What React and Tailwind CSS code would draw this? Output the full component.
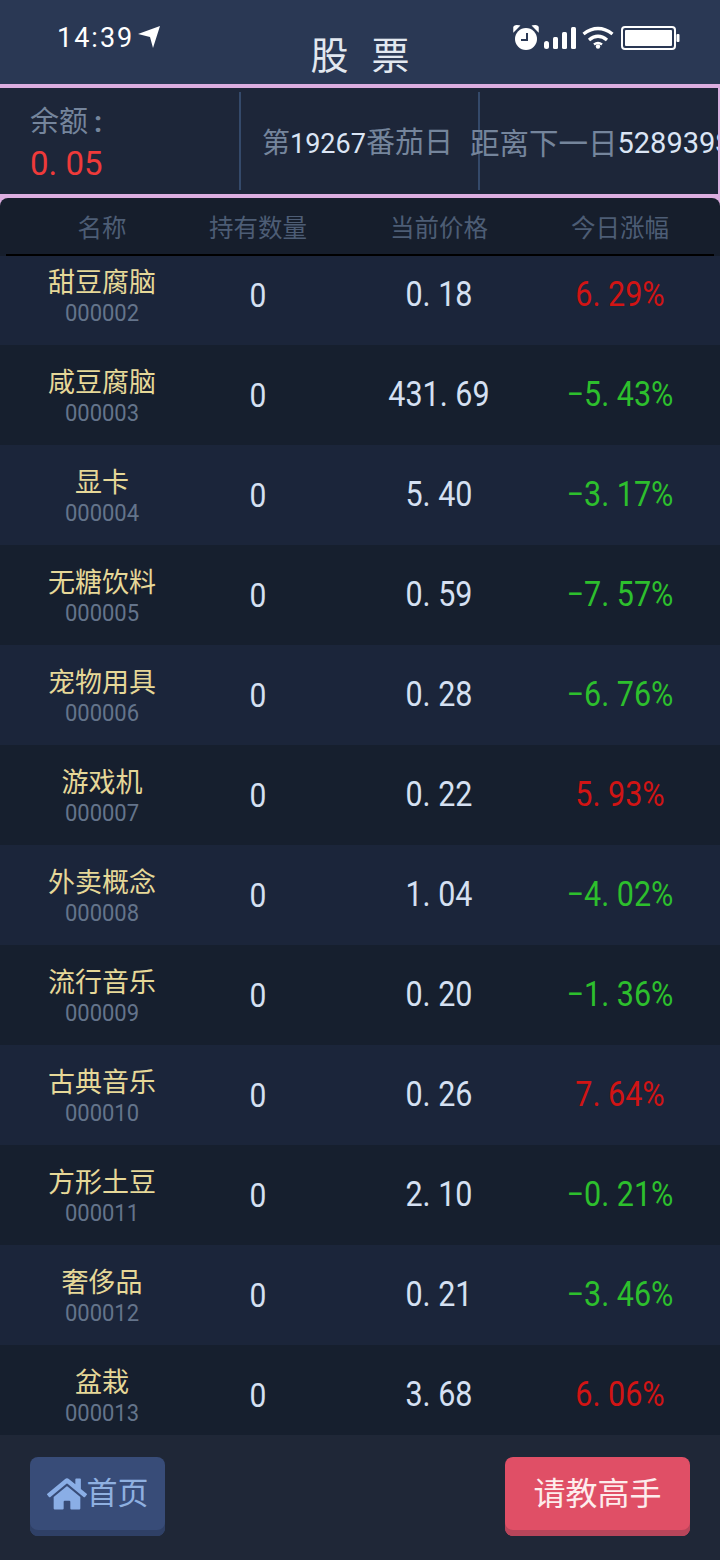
import { FaHome } from "react-icons/fa";

const stocks = [
	{ name: "甜豆腐脑", code: "000002", price: "0. 18", change: "6. 29%", up: true },
	{ name: "咸豆腐脑", code: "000003", price: "431. 69", change: "−5. 43%" },
	{ name: "显卡", code: "000004", price: "5. 40", change: "−3. 17%" },
	{ name: "无糖饮料", code: "000005", price: "0. 59", change: "−7. 57%" },
	{ name: "宠物用具", code: "000006", price: "0. 28", change: "−6. 76%" },
	{ name: "游戏机", code: "000007", price: "0. 22", change: "5. 93%", up: true },
	{ name: "外卖概念", code: "000008", price: "1. 04", change: "−4. 02%" },
	{ name: "流行音乐", code: "000009", price: "0. 20", change: "−1. 36%" },
	{ name: "古典音乐", code: "000010", price: "0. 26", change: "7. 64%", up: true },
	{ name: "方形土豆", code: "000011", price: "2. 10", change: "−0. 21%" },
	{ name: "奢侈品", code: "000012", price: "0. 21", change: "−3. 46%" },
	{ name: "盆栽", code: "000013", price: "3. 68", change: "6. 06%", up: true },
];

const StatusIcons = () => (
	<div className="flex items-center gap-[5px]">
		{/* alarm */}
		<svg width="26" height="28" viewBox="0 0 26 28" fill="none">
			<path d="M1 7 L6 2 Q2 1 1 3 Z M25 7 L20 2 Q24 1 25 3 Z" fill="#fff" stroke="#fff" strokeWidth="1.5" />
			<circle cx="13" cy="15" r="11" fill="#fff" />
			<path d="M14 9 V16 H8" stroke="#2a3854" strokeWidth="2" fill="none" />
		</svg>
		{/* signal */}
		<svg width="32" height="22" viewBox="0 0 32 22" fill="#fff">
			<rect x="0" y="14" width="5" height="8" rx="2.5" />
			<rect x="9" y="10" width="5" height="12" rx="1.5" />
			<rect x="18" y="5" width="5" height="17" rx="1.5" />
			<rect x="27" y="0" width="5" height="22" rx="1.5" />
		</svg>
		{/* wifi */}
		<svg width="32" height="24" viewBox="0 0 32 24" fill="none" stroke="#fff" strokeWidth="3.4" className="ml-[1px]">
			<path d="M1.5 8 Q16 -3 30.5 8" />
			<path d="M7 14 Q16 6.5 25 14" />
			<circle cx="16" cy="20.5" r="2.2" fill="#fff" stroke="none" />
			<path d="M12 18.5 Q16 15.5 20 18.5" strokeWidth="2.6" />
		</svg>
		{/* battery */}
		<svg width="59" height="24" viewBox="0 0 59 24" className="ml-[2px]">
			<rect x="1" y="1" width="53" height="22" rx="3" fill="none" stroke="#fff" strokeWidth="2" />
			<rect x="4" y="4" width="47" height="16" rx="1" fill="#fff" />
			<rect x="55.5" y="8" width="3" height="8" rx="1" fill="#fff" />
		</svg>
	</div>
);

const StockRow = ({ stock, index }) => (
	<div
		className={`grid grid-cols-[204px_108px_254px_108px] items-center h-[100px] shrink-0 text-center ${
			index % 2 === 0 ? "bg-[#1b253a]" : "bg-[#161f2e]"
		} ${index === 0 ? "-mt-[11px]" : ""}`}
	>
		<div className="flex flex-col items-center pt-[2px]">
			<span className="text-[27px] leading-[34px] text-[#e6d898]">{stock.name}</span>
			<span className="-mt-[1px] inline-block scale-y-[1.12] text-[22px] leading-[27px] text-[#64748b]">{stock.code}</span>
		</div>
		<span className="inline-block scale-y-[1.12] text-[30px] text-[#d5e0f2]">0</span>
		<span className="inline-block scale-y-[1.12] text-[30.5px] text-[#d5e0f2] whitespace-nowrap">{stock.price}</span>
		<span
			className={`inline-block scale-y-[1.12] text-[30.5px] whitespace-nowrap ${
				stock.up ? "text-[#d11414]" : "text-[#2dbf2d]"
			}`}
		>
			{stock.change}
		</span>
	</div>
);

const App = () => {
	return (
		<div className="w-[720px] h-[1560px] overflow-hidden flex flex-col bg-[#1f2737] font-[Roboto,'Noto_Sans_CJK_SC',sans-serif]">
			{/* Header */}
			<div className="h-[84px] shrink-0 bg-[#2a3854] overflow-hidden">
				<div className="flex justify-between items-center pt-[24px] pl-[57px] pr-[40px]">
					<div className="flex items-center gap-[3px] text-[27px] leading-[28px] text-white tracking-[2px]">
						<span>14:39</span>
						<svg width="24" height="24" viewBox="0 0 24 24" fill="#fff" className="-mt-[3px]">
							<path d="M1 9 L23 1 L16 23 L13 12 Z" />
						</svg>
					</div>
					<StatusIcons />
				</div>
				<div className="-mt-[18px] flex justify-center gap-[23px] text-[38px] leading-[44px] text-[#e2e8f0]">
					<span>股</span>
					<span>票</span>
				</div>
			</div>

			{/* Balance */}
			<div className="h-[114px] shrink-0 flex items-center bg-[#1d2639] border-y-[4px] border-r-2 border-[#dcaee0] overflow-hidden">
				<div className="w-[241px] h-[98px] shrink-0 pl-[30px] pt-[9px] border-r-2 border-[#34496a]">
					<div className="text-[29px] leading-[43px] text-[#75859c]">
						余额<span className="ml-[6px] font-bold">:</span>
					</div>
					<div className="text-[33px] leading-[40px] text-[#ef3a3a]">0. 05</div>
				</div>
				<div className="w-[239px] h-[98px] shrink-0 flex items-center pt-[6px] pl-[21px] border-r-2 border-[#34496a] whitespace-nowrap text-[28px] text-[#75859c]">
					第<span className="text-[#dbe5f5] text-[27px]">19267</span><span className="text-[29px]">番茄日</span>
				</div>
				<div className="h-[98px] flex items-center pt-[6px] whitespace-nowrap text-[29.5px] text-[#75859c] -ml-[10px]">
					距离下一日<span className="text-[#dbe5f5] text-[29px]">528939S</span>
				</div>
			</div>

			{/* Table */}
			<div className="flex-1 min-h-0 overflow-hidden flex flex-col">
				<div className="relative z-10 shrink-0 bg-[#dcaee0]">
					<div className="h-[58px] px-[6px] bg-[#161e2c] rounded-t-lg">
						<div className="grid grid-cols-[192px_120px_242px_120px] items-center h-full pt-[7px] border-b-2 border-black text-center text-[24.5px] text-[#4d5d75]">
							<span>名称</span>
							<span>持有数量</span>
							<span>当前价格</span>
							<span>今日涨幅</span>
						</div>
					</div>
				</div>
				{stocks.map((stock, index) => (
					<StockRow key={stock.code} stock={stock} index={index} />
				))}
			</div>

			{/* Bottom bar */}
			<div className="h-[125px] shrink-0 flex justify-between items-start pt-[22px] pl-[30px] pr-[30px] bg-[#1f2737]">
				<button className="w-[135px] h-[79px] flex items-center justify-center pb-[5px] rounded-lg bg-[#384c78] shadow-[inset_0_-6px_0_#2f4066] text-[31px] text-[#8fb0e0]">
					<FaHome size={40} className="text-[#8aaee6]" />
					<span>首页</span>
				</button>
				<button className="w-[185px] h-[79px] flex items-center justify-center pb-[5px] rounded-lg bg-[#e04f66] shadow-[inset_0_-6px_0_#b8455a] text-[32px] text-[#fdecec]">
					请教高手
				</button>
			</div>
		</div>
	);
};

export default App;
